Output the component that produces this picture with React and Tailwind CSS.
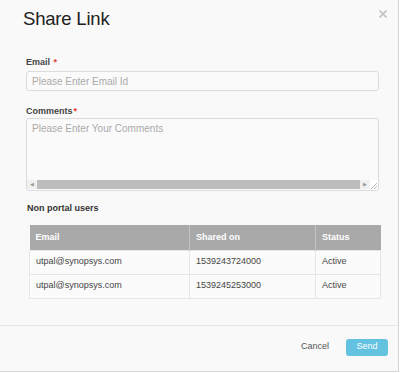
import React from 'react';

const rows = [
  { email: 'utpal@synopsys.com', sharedOn: '1539243724000', status: 'Active' },
  { email: 'utpal@synopsys.com', sharedOn: '1539245253000', status: 'Active' },
];

const Required = () => <span className="text-[#e53935] ml-[1px]">*</span>;

export default function App() {
  return (
    <div className="w-[400px] h-[373px] bg-white font-['Liberation_Sans',Arial,sans-serif]">
      <div className="w-[399px] h-[372px] bg-[#f9f9f9] border-r border-b border-[#d6d6d6] flex flex-col">
        {/* header */}
        <div className="flex justify-between items-start pl-[23px] pr-[11px] pt-[7px] h-[52px]">
          <h2 className="text-[18.5px] leading-[24px] text-[#222] tracking-[-0.2px]">Share Link</h2>
          <svg className="mt-[3px]" width="8" height="8" viewBox="0 0 8 8">
            <path d="M0.5 0.5 L7.5 7.5 M7.5 0.5 L0.5 7.5" stroke="#c4c4c4" strokeWidth="1.6" />
          </svg>
        </div>

        {/* body */}
        <div className="pl-[26px] pr-[19px] flex flex-col">
          <label className="text-[9px] leading-[12px] font-bold text-[#444] mt-[4px]">
            Email <Required />
          </label>
          <div className="mt-[3px] h-[20px] border border-[#dcdcdc] rounded-[3px] bg-[#fafafa] px-[5px] flex items-center text-[10px] text-[#aaa]">
            Please Enter Email Id
          </div>

          <label className="text-[9px] leading-[12px] font-bold text-[#444] mt-[14px]">
            Comments<Required />
          </label>
          <div className="mt-[1px] h-[73px] border border-[#dcdcdc] rounded-[3px] bg-[#fafafa] flex flex-col">
            <div className="flex-1 px-[5px] pt-[3px] text-[10px] leading-[13px] text-[#aaa]">
              Please Enter Your Comments
            </div>
            <div className="h-[9px] mb-[1px] flex items-center">
              <div className="w-[343px] h-[9px] bg-[#f0f0f0] flex items-center">
                <span className="w-[10px] text-[5px] text-[#999] text-center">◀</span>
                <div className="flex-1 h-[9px] bg-[#bdbdbd]" />
                <span className="w-[10px] text-[5px] text-[#999] text-center">▶</span>
              </div>
              <div className="flex-1 h-[9px] bg-white relative">
                <svg className="absolute right-[1px] bottom-0" width="6" height="6" viewBox="0 0 6 6">
                  <path d="M6 0 L0 6 M6 3 L3 6" stroke="#aaa" strokeWidth="0.8" />
                </svg>
              </div>
            </div>
          </div>

          <div className="text-[9px] leading-[12px] font-bold text-[#333] mt-[11px] ml-[1px]">Non portal users</div>

          <table className="mt-[11px] ml-[3px] w-[352px] border-collapse text-[9px] text-[#444]">
            <thead>
              <tr className="h-[25px] bg-[#a9a9a9] text-white font-bold">
                <th className="w-[160px] text-left pl-[6px] font-bold border-r border-[#c4c4c4]">Email</th>
                <th className="w-[126px] text-left pl-[6px] font-bold border-r border-[#c4c4c4]">Shared on</th>
                <th className="text-left pl-[6px] font-bold">Status</th>
              </tr>
            </thead>
            <tbody>
              {rows.map((r) => (
                <tr key={r.sharedOn} className="h-[24px] bg-[#fbfbfb]">
                  <td className="pl-[6px] border border-[#e6e6e6]">{r.email}</td>
                  <td className="pl-[6px] border border-[#e6e6e6]">{r.sharedOn}</td>
                  <td className="pl-[6px] border border-[#e6e6e6]">{r.status}</td>
                </tr>
              ))}
            </tbody>
          </table>
        </div>

        {/* footer */}
        <div className="mt-auto h-[46px] border-t border-[#e6e6e6] flex items-center justify-end pr-[10px] pb-[3px]">
          <button className="text-[9px] text-[#555] mr-[17px]">Cancel</button>
          <button className="w-[42px] h-[17px] rounded-[3px] bg-[#62c2df] text-white text-[9px]">Send</button>
        </div>
      </div>
    </div>
  );
}
